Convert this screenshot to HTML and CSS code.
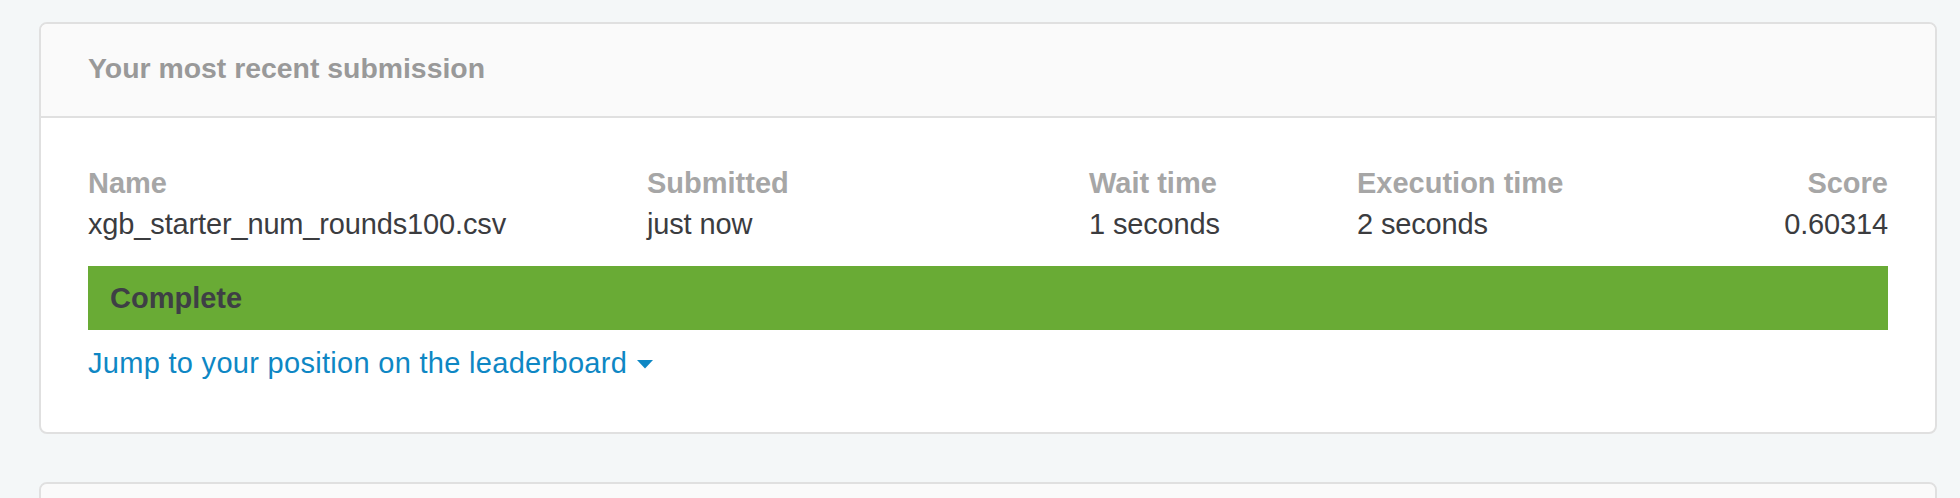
FILE: index.html
```html
<!DOCTYPE html>
<html lang="en">
<head>
<meta charset="utf-8">
<title>Your most recent submission</title>
<link rel="stylesheet" href="styles.css">
</head>
<body>
<main class="page">
  <section class="card">
    <header class="card-header">
      <h2 class="card-title">Your most recent submission</h2>
    </header>
    <div class="card-body">
      <div class="sub-grid">
        <div class="cell">
          <div class="label">Name</div>
          <div class="value">xgb_starter_num_rounds100.csv</div>
        </div>
        <div class="cell">
          <div class="label">Submitted</div>
          <div class="value">just now</div>
        </div>
        <div class="cell">
          <div class="label">Wait time</div>
          <div class="value">1 seconds</div>
        </div>
        <div class="cell">
          <div class="label">Execution time</div>
          <div class="value">2 seconds</div>
        </div>
        <div class="cell cell-right">
          <div class="label">Score</div>
          <div class="value">0.60314</div>
        </div>
      </div>
      <div class="status-bar">Complete</div>
      <a class="jump-link" href="#">Jump to your position on the leaderboard<svg class="caret" width="16" height="9" viewBox="0 0 16 9" aria-hidden="true"><path d="M0 0 H16 L8 8.5 Z" fill="currentColor"/></svg></a>
    </div>
  </section>
  <section class="card card-next">
    <header class="card-header card-header-empty"></header>
  </section>
</main>
</body>
</html>
```
FILE: styles.css
```css
html, body {
  margin: 0;
  padding: 0;
}
body {
  background: #f4f7f8;
  font-family: "Liberation Sans", Arial, Helvetica, sans-serif;
  font-size: 29px;
  color: #3c3c3c;
  overflow: hidden;
}
.page {
  padding: 22px 23px 0 39px;
  width: 1898px;
}
.card {
  background: #ffffff;
  border: 2px solid #e0e0e0;
  border-radius: 8px;
  overflow: hidden;
}
.card-header {
  background: #fafafa;
  border-bottom: 2px solid #e0e0e0;
  padding: 24px 47px 28px;
}
.card-title {
  margin: 0;
  font-size: 28.4px;
  line-height: 40px;
  font-weight: bold;
  color: #999999;
}
.card-body {
  padding: 45px 47px 48px;
}
.sub-grid {
  display: grid;
  grid-template-columns: 559px 442px 268px 1fr 1fr;
  line-height: 41px;
}
.cell-right {
  text-align: right;
}
.label {
  font-weight: bold;
  color: #a6a6a6;
}
.value {
  color: #3b3c3f;
  letter-spacing: -0.15px;
}
.status-bar {
  margin-top: 21px;
  height: 64px;
  line-height: 64px;
  background: #69ab35;
  color: #3e3f45;
  font-weight: bold;
  padding-left: 22px;
}
.jump-link {
  display: inline-block;
  margin-top: 13px;
  line-height: 41px;
  letter-spacing: 0.3px;
  color: #0e87c4;
  text-decoration: none;
}
.caret {
  margin-left: 10px;
  vertical-align: 4px;
}
.card-next {
  margin-top: 48px;
  height: 60px;
}
.card-header-empty {
  height: 100px;
  border-bottom: none;
}
```
